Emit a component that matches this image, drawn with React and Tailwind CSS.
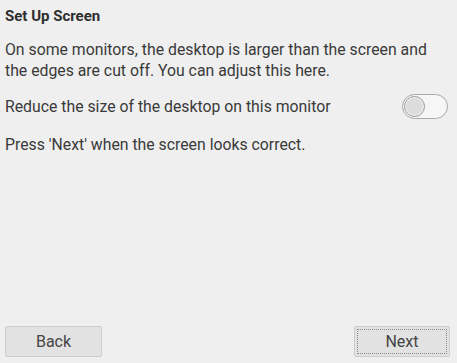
import { useState } from 'react'

function Toggle({ on, onChange }) {
  return (
    <button
      type="button"
      onClick={() => onChange(!on)}
      className="relative h-[25px] w-[46px] shrink-0 rounded-full border border-[#a8a8a8] bg-[#f6f6f6]"
    >
      <span
        className={
          on
            ? 'absolute top-[1px] left-[22px] h-[21px] w-[21px] rounded-full border border-[#9a9a9a] bg-[#dcdcdc] shadow-[inset_0_0_0_1px_#f4f4f4]'
            : 'absolute top-[1px] left-[1px] h-[21px] w-[21px] rounded-full border border-[#9a9a9a] bg-[#dcdcdc] shadow-[inset_0_0_0_1px_#f4f4f4]'
        }
      />
    </button>
  )
}

export default function App() {
  const [reduce, setReduce] = useState(false)

  return (
    <div
      className="flex h-[363px] w-[457px] flex-col bg-[#efefef] px-[5px] text-[15.8px] leading-[21px] text-[#3a3a3a]"
      style={{ fontFamily: 'Roboto, "Liberation Sans", sans-serif' }}
    >
      <h1 className="pt-[6px] text-[15px] font-bold text-[#2e2e2e]">Set Up Screen</h1>
      <p className="mt-[12px]">
        On some monitors, the desktop is larger than the screen and the edges are cut off. You can adjust this here.
      </p>
      <div className="mt-[13px] flex items-center justify-between pr-[4px]">
        <span>Reduce the size of the desktop on this monitor</span>
        <Toggle on={reduce} onChange={setReduce} />
      </div>
      <p className="mt-[15px]">Press 'Next' when the screen looks correct.</p>

      <div className="mt-auto mb-[6px] flex items-center justify-between pr-[2px]">
        <button className="h-[31px] w-[97px] rounded-[2px] border border-[#cdcdcd] bg-[#e2e2e2] text-[16px] text-[#444]">
          Back
        </button>
        <button className="h-[31px] w-[96px] rounded-[2px] border border-[#cdcdcd] bg-[#e2e2e2] p-[2px] text-[16px] text-[#444]">
          <span className="flex h-full w-full items-center justify-center border border-dotted border-[#8a8a8a]">
            Next
          </span>
        </button>
      </div>
    </div>
  )
}
